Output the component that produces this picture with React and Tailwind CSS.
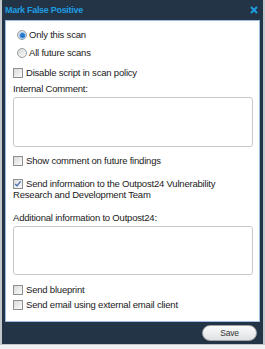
import React from "react";

function Check({ checked }) {
  return (
    <span className="relative flex-none w-[10px] h-[10px] border border-[#8e9194] bg-gradient-to-br from-[#d9dadb] to-[#fbfbfb]">
      {checked && (
        <svg viewBox="0 0 10 10" className="absolute left-0 top-0 w-[8px] h-[8px]">
          <path d="M1.5 5 L3.8 7.3 L8.2 1.8" fill="none" stroke="#3b63b0" strokeWidth="1.5" />
        </svg>
      )}
    </span>
  );
}

function Radio({ checked }) {
  return (
    <span className="flex-none w-[10px] h-[10px] rounded-full border border-[#9a9da0] bg-gradient-to-br from-[#d6d7d8] to-[#fafafa] flex items-center justify-center">
      {checked && <span className="w-[5px] h-[5px] rounded-full bg-[#2a79c9] ring-1 ring-[#9cc6ee]" />}
    </span>
  );
}

function CheckRow({ checked, children, className = "" }) {
  return (
    <div className={"flex items-center h-[14px] gap-[3px] " + className}>
      <Check checked={checked} />
      <span>{children}</span>
    </div>
  );
}

export default function App() {
  return (
    <div className="w-[265px] h-[349px] bg-[#eef0f2] overflow-hidden font-['Liberation_Sans',Arial,sans-serif] text-[9.5px] tracking-[-0.2px] text-[#1a1a1a]">
      <div className="h-[345px] bg-[#c4c8cc] px-[2px]">
        <div className="h-[344px] bg-[#233446] flex flex-col">
          <div className="h-[20px] flex items-center justify-between pl-[3px] pr-[5px]">
            <span className="text-[9px] tracking-[-0.3px] font-bold text-[#1e9ee2] leading-none">Mark False Positive</span>
            <svg viewBox="0 0 8 8" className="w-[8px] h-[8px]">
              <path d="M1 1 L7 7 M7 1 L1 7" stroke="#1e9ee2" strokeWidth="2" />
            </svg>
          </div>
          <div className="mx-[3px] h-[302px] bg-white border border-[#9fbde3] pl-[7px] pr-[6px] pt-[7px] flex flex-col">
            <div className="pl-[4px] flex flex-col gap-[4px]">
              <div className="flex items-center h-[14px] gap-[2px]">
                <Radio checked />
                <span>Only this scan</span>
              </div>
              <div className="flex items-center h-[14px] gap-[2px]">
                <Radio />
                <span>All future scans</span>
              </div>
            </div>
            <CheckRow className="mt-[6px]">Disable script in scan policy</CheckRow>
            <div className="mt-[3px] h-[12px] leading-[12px]">Internal Comment:</div>
            <div className="mt-[2px] h-[50px] border border-[#c5c9ce] rounded-[3px] bg-white" />
            <CheckRow className="mt-[7px]">Show comment on future findings</CheckRow>
            <div className="mt-[10px] flex items-start gap-[3px] leading-[11px]">
              <span className="mt-[1px] flex"><Check checked /></span>
              <span>Send information to the Outpost24 Vulnerability</span>
            </div>
            <div className="leading-[11px]">Research and Development Team</div>
            <div className="mt-[12px] h-[12px] leading-[12px]">Additional information to Outpost24:</div>
            <div className="mt-[2px] h-[49px] border border-[#c5c9ce] rounded-[3px] bg-white" />
            <CheckRow className="mt-[8px]">Send blueprint</CheckRow>
            <CheckRow className="mt-[1px]">Send email using external email client</CheckRow>
          </div>
          <div className="flex-1 flex items-center justify-end pr-[6px]">
            <button className="w-[55px] h-[16px] rounded-full border border-[#9ea3a8] bg-gradient-to-b from-[#fbfbfb] to-[#dfe1e3] text-[8.5px] text-[#333] leading-none">
              Save
            </button>
          </div>
        </div>
      </div>
    </div>
  );
}
